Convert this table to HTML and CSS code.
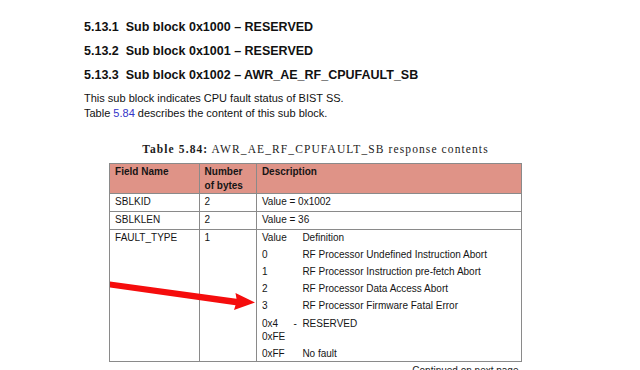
FILE: index.html
```html
<!DOCTYPE html>
<html>
<head>
<meta charset="utf-8">
<link rel="stylesheet" href="styles.css">
</head>
<body>
<div class="page">
  <h2 class="sec"><span class="num">5.13.1</span>Sub block 0x1000 – RESERVED</h2>
  <h2 class="sec"><span class="num">5.13.2</span>Sub block 0x1001 – RESERVED</h2>
  <h2 class="sec"><span class="num">5.13.3</span>Sub block 0x1002 – AWR_AE_RF_CPUFAULT_SB</h2>
  <p class="body">This sub block indicates CPU fault status of BIST SS.<br>Table <a class="ref">5.84</a> describes the content of this sub block.</p>
  <div class="caption"><b>Table 5.84:</b> AWR_AE_RF_CPUFAULT_SB response contents</div>
  <table class="tbl">
    <colgroup><col class="c1"><col class="c2"><col class="c3"></colgroup>
    <thead>
      <tr><th>Field Name</th><th>Number<br>of bytes</th><th>Description</th></tr>
    </thead>
    <tbody>
      <tr><td>SBLKID</td><td>2</td><td>Value = 0x1002</td></tr>
      <tr><td>SBLKLEN</td><td>2</td><td>Value = 36</td></tr>
      <tr class="last"><td>FAULT_TYPE</td><td>1</td><td>
        <div class="defs">
          <div>Value</div><div>Definition</div>
          <div>0</div><div>RF Processor Undefined Instruction Abort</div>
          <div>1</div><div>RF Processor Instruction pre-fetch Abort</div>
          <div>2</div><div>RF Processor Data Access Abort</div>
          <div>3</div><div>RF Processor Firmware Fatal Error</div>
          <div class="just">0x4 - 0xFE</div><div>RESERVED</div>
          <div>0xFF</div><div>No fault</div>
        </div>
      </td></tr>
    </tbody>
  </table>
  <div class="cont">Continued on next page</div>
</div>
<svg class="arrow" width="640" height="370" viewBox="0 0 640 370">
  <polygon points="110,281.5 236.5,298.8 235.5,293 255,302.5 234,310 235.5,305.2 110,287.6" fill="#f50d0d"/>
</svg>
</body>
</html>
```
FILE: styles.css
```css
html, body {
  margin: 0;
  padding: 0;
  background: #ffffff;
}
body {
  position: relative;
  width: 640px;
  height: 370px;
  overflow: hidden;
  font-family: "Liberation Sans", Arial, sans-serif;
  color: #111;
}
.page {
  width: 463px;
  padding: 14.6px 0 0 84px;
}
.sec {
  margin: 0;
  font-size: 12.5px;
  line-height: 24px;
  font-weight: bold;
  white-space: nowrap;
}
.num {
  display: inline-block;
  margin-right: 7px;
}
.body {
  margin: 4px 0 0 0;
  font-size: 11px;
  line-height: 15px;
}
.ref {
  color: #3434c8;
}
.caption {
  margin-top: 21.3px;
  text-align: center;
  font-family: "Liberation Serif", "Times New Roman", serif;
  font-size: 11.5px;
  line-height: 15px;
  letter-spacing: 1.1px;
  color: #1c1c1c;
  white-space: nowrap;
}
.tbl {
  margin: 5.8px auto 0 auto;
  border-collapse: collapse;
  width: 412px;
  table-layout: fixed;
  font-size: 10px;
  line-height: 13.3px;
  color: #151515;
}
.c1 { width: 89.5px; }
.c2 { width: 57.3px; }
.c3 { width: 265px; }
.tbl th, .tbl td {
  border: 1px solid #8a8a8a;
  text-align: left;
  vertical-align: top;
  padding: 1px 5px 2.7px 5px;
}
.tbl th {
  background: #df9387;
  font-weight: bold;
  padding: 1.6px 5px 0.9px 5px;
}
.tbl tr.last td {
  padding-bottom: 1px;
}
.defs {
  display: grid;
  grid-template-columns: 35px 1fr;
  column-gap: 5.5px;
  row-gap: 3.9px;
}
.just {
  text-align: justify;
}
.cont {
  margin-top: 2.5px;
  width: 412px;
  margin-left: 25.5px;
  text-align: right;
  padding-right: 3px;
  box-sizing: border-box;
  font-size: 10px;
  line-height: 12px;
  color: #222;
}
.arrow {
  position: absolute;
  left: 0;
  top: 0;
  pointer-events: none;
}
```
